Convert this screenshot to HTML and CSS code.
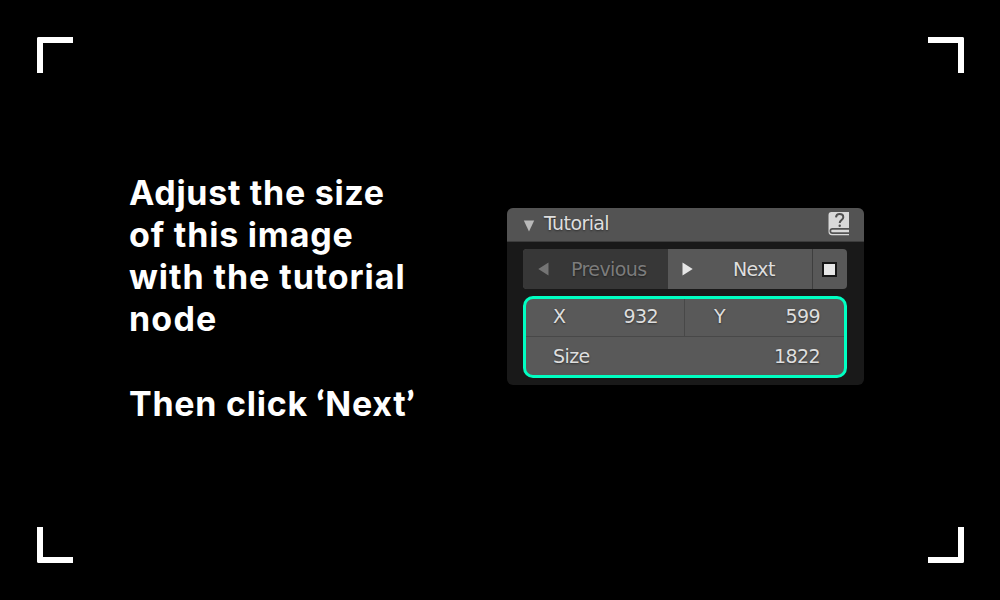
FILE: index.html
```html
<!DOCTYPE html>
<html lang="en">
<head>
<meta charset="utf-8">
<title>Tutorial</title>
<link rel="stylesheet" href="styles.css">
</head>
<body>
<main class="stage">
  <i class="corner top left"></i><i class="corner top right"></i>
  <i class="corner bottom left"></i><i class="corner bottom right"></i>
  <section class="message">
    <p><span class="l1">Adjust the size</span><br><span class="l2">of this image</span><br><span class="l3">with the tutorial</span><br><span class="l4">node</span></p>
    <p><span class="l5">Then click <span class="quote">‘</span>Next<span class="quote">’</span></span></p>
  </section>
  <section class="node">
    <header class="head">
      <svg class="collapse" width="12" height="12" viewBox="0 0 12 12"><path d="M.8.6h10.4L6 11.6z" fill="#b9b9b9"/></svg>
      <span class="title">Tutorial</span>
      <svg class="book" width="22" height="25" viewBox="0 0 22 25">
        <path d="M3.500 1H21v16H4.500a3 3 0 0 0 0 6H21V24.300H4Q.5 24.300 .5 20.500V4Q.5 1 3.500 1z" fill="#d9d9d9"/>
        <path d="M4.500 18.700H21v2.600H4.500a1.300 1.300 0 0 1 0-2.600z" fill="#d9d9d9"/>
        <path d="M8 6.400C8.200 4 9.800 3 11.600 3c2.100 0 3.700 1.200 3.700 3.200 0 2.700-3.600 2.900-3.600 5.800" fill="none" stroke="#505050" stroke-width="2"/>
        <circle cx="11.700" cy="14.800" r="1.200" fill="#505050"/>
      </svg>
    </header>
    <div class="buttons">
      <div class="prev"><svg width="11" height="14" viewBox="0 0 11 14"><path d="M10.500.5v13L.3 7z" fill="#747474"/></svg><span>Previous</span></div>
      <div class="next"><svg width="11" height="14" viewBox="0 0 11 14"><path d="M.5.5v13L10.700 7z" fill="#e6e6e6"/></svg><span>Next</span></div>
      <div class="stop"><i></i></div>
    </div>
    <div class="fields">
      <div class="field x"><span>X</span><span>932</span></div>
      <div class="field y"><span>Y</span><span>599</span></div>
      <div class="field size"><span>Size</span><span>1822</span></div>
    </div>
  </section>
</main>
</body>
</html>
```
FILE: styles.css
```css
* { box-sizing: border-box; }
body { margin: 0; background: #000; }
.stage { position: relative; width: 1000px; height: 600px; overflow: hidden; display: flex; align-items: flex-start; background: #000; }
.corner { position: absolute; width: 36px; height: 36px; border: 0 solid #fff; }
.top { top: 37px; border-top-width: 6px; }
.bottom { bottom: 37px; border-bottom-width: 6px; }
.left { left: 37px; border-left-width: 6px; }
.right { right: 36px; border-right-width: 6px; }
.top.left { border-top-left-radius: 2px; }
.top.right { border-top-right-radius: 2px; }
.bottom.left { border-bottom-left-radius: 2px; }
.bottom.right { border-bottom-right-radius: 2px; }

.message { margin: 172px 0 0 129px; width: 378px; color: #fff; font: 700 34px/42px Inter, sans-serif; white-space: nowrap; }
.message p { margin: 0 0 42px; }
.l1 { letter-spacing: .7px; }
.l2 { letter-spacing: .8px; }
.l3 { letter-spacing: .93px; }
.l4 { letter-spacing: 1.2px; }
.l5 { letter-spacing: .75px; }
.quote { font-family: Lato, sans-serif; font-weight: 800; }

.node { margin-top: 208px; width: 357px; height: 177px; border-radius: 6px; overflow: hidden; background: #191919; color: #dedede; font: 19px/22px "DejaVu Sans", sans-serif; letter-spacing: -.6px; text-shadow: 0 1px 2px rgba(0,0,0,.45); }
.head { display: flex; height: 34px; padding: 3px 14px 0 16px; background: #535353; border-bottom: 1px solid #3c3c3c; }
.collapse { margin-top: 9px; }
.title { margin: 1px 0 0 9px; }
.book { margin-left: auto; }
.buttons { display: flex; margin: 7px 17px 0 16px; height: 40px; border-radius: 4px; overflow: hidden; background: #585858; }
.prev, .next { display: flex; align-items: center; }
.prev { width: 145px; padding-left: 15px; background: #373737; color: #7c7c7c; }
.prev span { margin: 0 0 1px 22px; }
.next { width: 145px; padding-left: 14px; border-right: 1px solid #3e3e3e; }
.next span { margin: 0 0 1px 40px; }
.stop { flex: 1; display: flex; align-items: center; padding-left: 9px; }
.stop i { width: 15px; height: 15px; background: #e6e6e6; border: 2px solid #151515; }
.fields { display: grid; grid-template-columns: 159px 1fr; grid-template-rows: 38px 38px; margin: 7px 17px 0 16px; width: 324px; height: 82px; border: 3px solid #00ffc2; border-radius: 10px; background: #595959; overflow: hidden; }
.field { display: flex; justify-content: space-between; align-items: center; padding: 0 24px 3px 27px; }
.x { border-right: 1px solid #484848; border-bottom: 1px solid #484848; padding-right: 26px; }
.y { border-bottom: 1px solid #484848; padding-left: 29px; }
.size { grid-column: 1 / 3; padding-top: 2px; }
```
